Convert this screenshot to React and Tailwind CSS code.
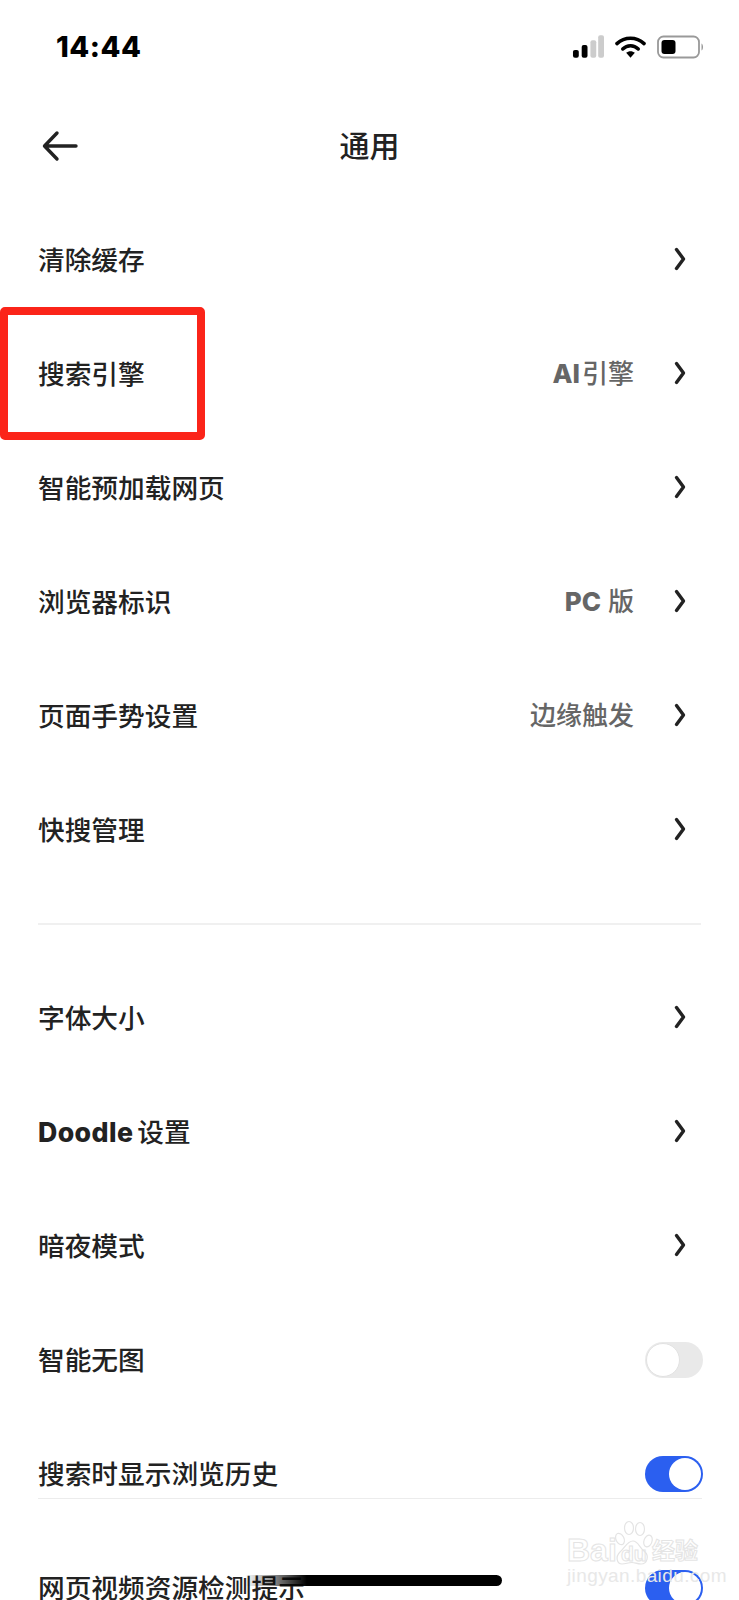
const FONT = "font-['Inter','Noto_Sans_CJK_SC',sans-serif]";

const TOP_ROWS = [
  { id: 'cache', label: '清除缓存' },
  { id: 'engine', label: '搜索引擎', latinValue: 'AI', value: '引擎', boxed: true },
  { id: 'preload', label: '智能预加载网页' },
  { id: 'ua', label: '浏览器标识', latinValue: 'PC', value: '版', valueGap: true },
  { id: 'gesture', label: '页面手势设置', value: '边缘触发' },
  { id: 'quick', label: '快搜管理' },
];

const BOTTOM_ROWS = [
  { id: 'font', label: '字体大小' },
  { id: 'doodle', latin: 'Doodle', label: '设置' },
  { id: 'dark', label: '暗夜模式' },
  { id: 'noimg', label: '智能无图', toggle: 'off' },
  { id: 'history', label: '搜索时显示浏览历史', toggle: 'on', line: true },
  { id: 'video', label: '网页视频资源检测提示', toggle: 'on' },
];

function Chevron() {
  return (
    <svg width="12" height="24" viewBox="0 0 12 24" fill="none" className="mb-[2px] ml-[40px] mr-[17px]">
      <path d="M2.5 2.5 L9.5 12 L2.5 21.5" stroke="#222" strokeWidth="3.4" strokeLinecap="round" strokeLinejoin="round" />
    </svg>
  );
}

function Toggle({ on }) {
  if (on) {
    return (
      <div className="flex h-[36px] w-[58px] justify-end rounded-full bg-[#2b5ff0] p-[2px]">
        <div className="h-[32px] w-[32px] rounded-full bg-white" />
      </div>
    );
  }
  return (
    <div className="flex h-[36px] w-[58px] justify-start rounded-full bg-[#e9e9e9] p-[1px]">
      <div className="h-[34px] w-[34px] rounded-full border border-[#e2e2e2] bg-white" />
    </div>
  );
}

function Row({ row }) {
  return (
    <div className="relative flex h-[114px] items-center justify-between pl-[38px] pr-[36px]">
      <span className="flex items-center text-[26.7px] font-medium text-[#222]">
        {row.latin && <span className="mr-[4px] font-extrabold tracking-[0.4px]">{row.latin}</span>}
        {row.label}
      </span>
      {row.toggle ? (
        <Toggle on={row.toggle === 'on'} />
      ) : (
        <div className="flex items-center">
          {row.value && (
            <span className="mb-[1px] flex items-center text-[26px] font-medium text-[#666]">
              {row.latinValue && (
                <span className={`font-extrabold ${row.valueGap ? 'mr-[7px]' : 'mr-[2px]'}`}>{row.latinValue}</span>
              )}
              {row.value}
            </span>
          )}
          <Chevron />
        </div>
      )}
      {row.boxed && (
        <div className="absolute left-0 top-[-10px] h-[133px] w-[205px] rounded-[5px] border-[8px] border-[#fb2419]" />
      )}
      {row.line && <div className="absolute bottom-[32px] left-[38px] right-[37px] h-[1.5px] bg-[#ececec]" />}
    </div>
  );
}

function Watermark() {
  const outline = "text-transparent [-webkit-text-stroke:1px_#e4e4e4]";
  return (
    <div className="absolute left-[567px] top-[1520px] h-[64px] w-[136px] font-['Liberation_Sans','Noto_Sans_CJK_SC',sans-serif]">
      <span className={`absolute left-0 top-[14px] text-[32px] font-bold leading-[32px] ${outline}`}>Bai</span>
      <svg width="40" height="47" viewBox="0 0 40 47" fill="none" stroke="#e4e4e4" strokeWidth="1.2" className="absolute left-[47px] top-0">
        <ellipse cx="6" cy="19" rx="4" ry="6" transform="rotate(-25 6 19)" />
        <ellipse cx="15" cy="8" rx="4.5" ry="6.5" />
        <ellipse cx="26" cy="9" rx="4.5" ry="6.5" />
        <ellipse cx="34" cy="21" rx="4" ry="6" transform="rotate(20 34 21)" />
        <path d="M19 21 C24 21 25 27 30 31 C36 36 33 44 27 44 C23 44 21 42.5 18 42.5 C14 42.5 12 44 8 44 C3 44 1 37 6 32 C11 28 13 21 19 21 Z" />
      </svg>
      <span className={`absolute left-[54px] top-[23px] text-[21px] font-bold leading-[21px] ${outline}`}>du</span>
      <span className={`absolute left-[85px] top-[19px] text-[23px] font-bold leading-[24px] ${outline}`}>经验</span>
      <span className="absolute left-0 top-[46px] text-[19px] leading-[20px] tracking-[0.4px] text-[#e8e8e8]">jingyan.baidu.com</span>
    </div>
  );
}

export default function App() {
  return (
    <div className={`relative h-[1600px] w-[739px] overflow-hidden bg-white ${FONT}`}>
      <div className="flex h-[94px] items-center justify-between pl-[56px] pr-[35px]">
        <span className="text-[29px] font-extrabold tracking-[0.5px] text-black">14:44</span>
        <div className="flex items-center gap-[11px]">
          <svg width="32" height="24" viewBox="0 0 33 24">
            <rect x="1" y="15" width="6" height="8" rx="2" fill="#000" />
            <rect x="10" y="10" width="6" height="13" rx="2" fill="#000" />
            <rect x="19" y="5" width="6" height="18" rx="2" fill="#ccc" />
            <rect x="27" y="0" width="6" height="23" rx="2" fill="#ccc" />
          </svg>
          <svg width="31" height="24" viewBox="0 0 32 24" fill="none">
            <path d="M2 8.5 C10 1 22 1 30 8.5" stroke="#000" strokeWidth="3.6" strokeLinecap="round" />
            <path d="M8 14 C12.5 9.5 19.5 9.5 24 14" stroke="#000" strokeWidth="3.6" strokeLinecap="round" />
            <path d="M16 23 L11.5 18 C14 15.8 18 15.8 20.5 18 Z" fill="#000" />
          </svg>
          <svg width="47" height="24" viewBox="0 0 47 24" fill="none">
            <rect x="1" y="1.5" width="41" height="21" rx="5.5" stroke="#999" strokeWidth="1.8" />
            <rect x="4.5" y="5" width="14" height="14" rx="3" fill="#000" />
            <path d="M44.5 8.5 C46.5 9.5 46.5 14.5 44.5 15.5 Z" fill="#999" />
          </svg>
        </div>
      </div>

      <div className="relative flex h-[109px] items-center justify-center pb-[4px]">
        <svg width="36" height="32" viewBox="0 0 36 32" fill="none" className="absolute left-[42px] top-[36px]">
          <path d="M34 16 H3 M15 3 L2.5 16 L15 29" stroke="#222" strokeWidth="3.4" strokeLinecap="round" strokeLinejoin="round" />
        </svg>
        <span className="text-[30px] font-medium text-[#222]">通用</span>
      </div>

      {TOP_ROWS.map((row) => <Row key={row.id} row={row} />)}

      <div className="mx-[38px] my-[36px] h-[2px] w-[663px] bg-[#f0f0f0]" />

      {BOTTOM_ROWS.map((row) => <Row key={row.id} row={row} />)}

      <div className="absolute left-[245px] top-[1575px] h-[11px] w-[257px] rounded-r-full bg-gradient-to-r from-transparent via-black via-[24%] to-black" />

      <Watermark />
    </div>
  );
}
